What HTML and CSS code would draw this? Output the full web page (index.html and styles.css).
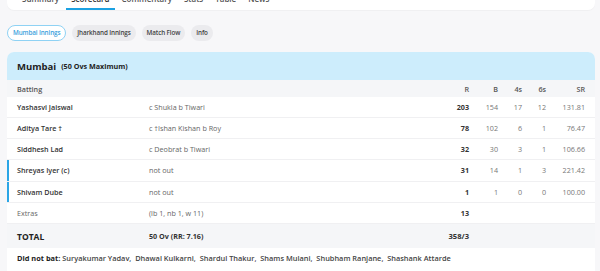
FILE: index.html
```html
<!DOCTYPE html>
<html>
<head>
<meta charset="utf-8">
<link rel="stylesheet" href="styles.css">
</head>
<body>
<div class="page">
  <nav class="tabs">
    <span class="tab">Summary</span>
    <span class="tab active">Scorecard</span>
    <span class="tab">Commentary</span>
    <span class="tab">Stats</span>
    <span class="tab">Table</span>
    <span class="tab">News</span>
  </nav>
  <div class="pills">
    <span class="pill selected">Mumbai Innings</span>
    <span class="pill">Jharkhand Innings</span>
    <span class="pill">Match Flow</span>
    <span class="pill">Info</span>
  </div>
  <div class="card">
    <div class="card-head"><span class="team">Mumbai</span><span class="ovs">(50 Ovs Maximum)</span></div>
    <div class="row head-row">
      <span class="c-name">Batting</span><span></span>
      <span class="num">R</span><span class="num">B</span><span class="num">4s</span><span class="num">6s</span><span class="num">SR</span>
    </div>
    <div class="row first">
      <span class="c-name">Yashasvi Jaiswal</span><span class="c-dis">c Shukla b Tiwari</span>
      <span class="num r">203</span><span class="num">154</span><span class="num">17</span><span class="num">12</span><span class="num">131.81</span>
    </div>
    <div class="row">
      <span class="c-name">Aditya Tare †</span><span class="c-dis">c †Ishan Kishan b Roy</span>
      <span class="num r">78</span><span class="num">102</span><span class="num">6</span><span class="num">1</span><span class="num">76.47</span>
    </div>
    <div class="row">
      <span class="c-name">Siddhesh Lad</span><span class="c-dis">c Deobrat b Tiwari</span>
      <span class="num r">32</span><span class="num">30</span><span class="num">3</span><span class="num">1</span><span class="num">106.66</span>
    </div>
    <div class="row notout">
      <span class="c-name">Shreyas Iyer (c)</span><span class="c-dis">not out</span>
      <span class="num r">31</span><span class="num">14</span><span class="num">1</span><span class="num">3</span><span class="num">221.42</span>
    </div>
    <div class="row notout">
      <span class="c-name">Shivam Dube</span><span class="c-dis">not out</span>
      <span class="num r">1</span><span class="num">1</span><span class="num">0</span><span class="num">0</span><span class="num">100.00</span>
    </div>
    <div class="row">
      <span class="c-extra">Extras</span><span class="c-dis">(lb 1, nb 1, w 11)</span>
      <span class="num r">13</span><span></span><span></span><span></span><span></span>
    </div>
    <div class="row total">
      <span class="c-total">TOTAL</span><span class="c-ov">50 Ov (RR: 7.16)</span>
      <span class="num r">358/3</span><span></span><span></span><span></span><span></span>
    </div>
    <div class="dnb"><b>Did not bat:</b> Suryakumar Yadav,&nbsp; Dhawal Kulkarni,&nbsp; Shardul Thakur,&nbsp; Shams Mulani,&nbsp; Shubham Ranjane,&nbsp; Shashank Attarde</div>
  </div>
</div>
</body>
</html>
```
FILE: styles.css
```css
* { box-sizing: border-box; }
html, body { margin: 0; padding: 0; }
body {
  background: #f7f7f9;
  font-family: "Open Sans", "Liberation Sans", sans-serif;
  color: #333;
  width: 600px;
  height: 271px;
  overflow: hidden;
}
.page { padding: 0 5px 0 7px; }
.tabs {
  background: #fff;
  margin-top: -12px;
  height: 22px;
  border-radius: 0 0 7px 7px;
  display: flex;
  padding-left: 10px;
  box-shadow: 0 1px 1px rgba(0,0,0,0.03);
}
.tab {
  font-size: 8px;
  color: #555;
  padding: 5px 5px 0;
  margin-right: 2px;
  height: 22px;
  line-height: 12px;
  font-weight: 600;
}
.tab.active { border-bottom: 2px solid #1ba1e2; color: #333; }
.pills {
  display: flex;
  gap: 6px;
  margin-top: 15px;
}
.pill {
  font-size: 6.3px;
  letter-spacing: -0.12px;
  font-weight: 600;
  color: #444;
  background: #ebebee;
  border-radius: 9px;
  height: 16px;
  line-height: 16px;
  padding: 0 5px;
}
.pill.selected {
  background: #fff;
  color: #3a9fdc;
  border: 1px solid #8fd2f4;
  line-height: 14px;
}
.card {
  margin-top: 11px;
  background: #fff;
  border-radius: 7px 7px 0 0;
  overflow: hidden;
}
.card-head {
  background: #cdedfc;
  height: 28px;
  padding: 0 10px;
  display: flex;
  align-items: center;
  gap: 5px;
}
.team { font-size: 9.5px; font-weight: 700; color: #222; }
.ovs { font-size: 7.2px; font-weight: 700; color: #222; }
.row {
  display: grid;
  grid-template-columns: 132px 1fr 30px 29px 24px 24px 39px;
  align-items: center;
  height: 21.4px;
  padding: 0 10px;
  border-bottom: 1px solid #f0f0f2;
  font-size: 7.2px;
}
.row.first { height: 20.5px; }
.head-row {
  background: #f5f6f8;
  height: 17px;
  color: #555;
  font-weight: 600;
  border-bottom: none;
}
.row .c-name { font-weight: 600; color: #333; }
.head-row .c-name { color: #555; }
.c-dis { color: #666; }
.num { text-align: right; color: #777; }
.head-row .num { color: #555; }
.num.r { font-weight: 700; color: #333; }
.notout { box-shadow: inset 2px 0 0 #2ba6e6; }
.c-extra { color: #666; }
.total {
  background: #f5f6f8;
  height: 24px;
  border-bottom: none;
}
.c-total { font-size: 8.5px; font-weight: 700; color: #222; }
.c-ov { font-weight: 700; color: #333; }
.total .num.r { font-size: 7.6px; }
.dnb {
  padding: 5px 10px 8px;
  font-size: 7.4px;
  font-weight: 600;
  color: #444;
}
.dnb b { color: #222; font-weight: 700; }
```
